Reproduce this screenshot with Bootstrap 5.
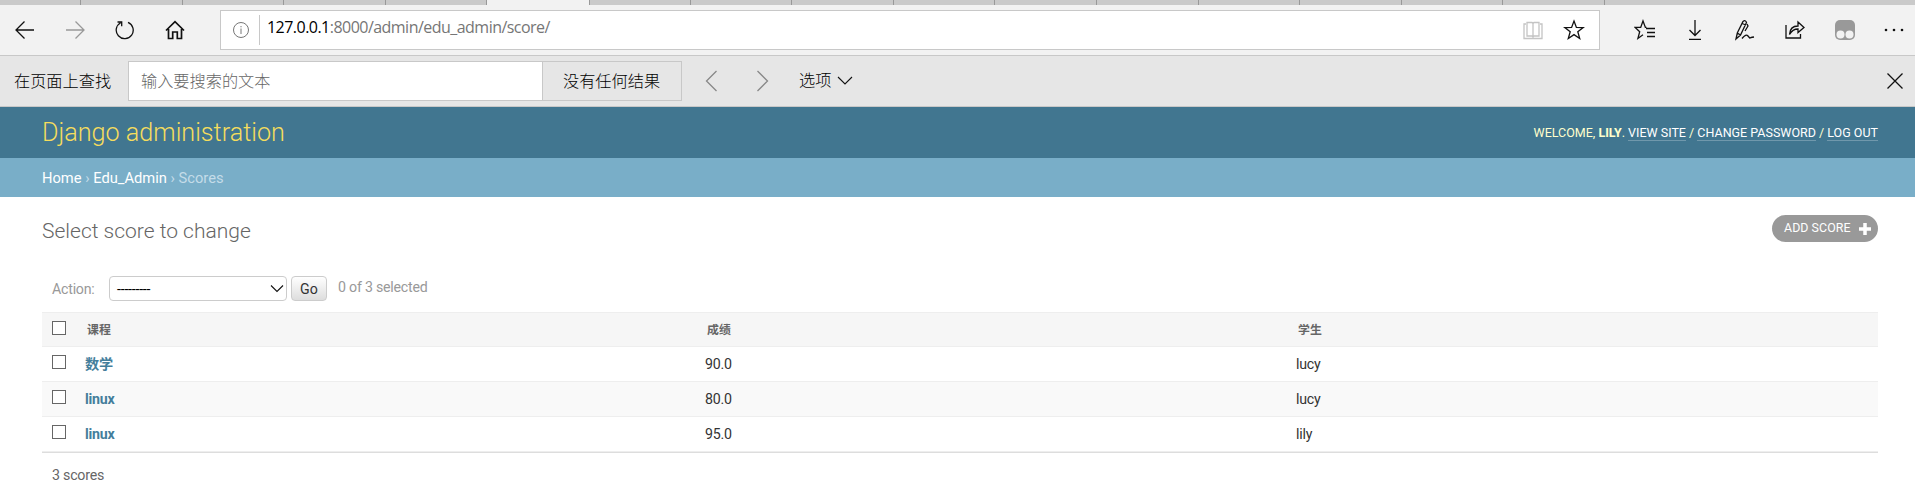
<!DOCTYPE html>
<html lang="zh">
<head>
<meta charset="utf-8">
<title>Select score to change | Django site admin</title>
<link href="https://cdn.jsdelivr.net/npm/bootstrap@5.3.0/dist/css/bootstrap.min.css" rel="stylesheet">
<style>
body{font-family:Roboto,"Noto Sans CJK SC",sans-serif;font-size:14.2px;letter-spacing:-.23px;line-height:20px;color:#333;height:490px;overflow:hidden;background:#fff}
svg{display:block;flex:none;fill:none;stroke:#111;stroke-width:1.3}
.tabstrip{height:5px;background:#cacaca;padding-left:80px}
.tabstrip i{flex:0 0 101.6px;border-left:1px solid #999;height:5px}
.tabstrip .live{background:#f2f2f2;flex-basis:103.6px;border-right:1px solid #999}
.tabstrip .live+i{border-left:0;flex-basis:99.6px}
.toolbar{height:51px;background:#f2f2f2;border-bottom:1px solid #c8c8c8;padding-bottom:1px}
.tool{width:50px;display:flex;justify-content:center;flex:none}
.address{margin-left:20px;width:1380px;height:40px;background:#fff;border:1px solid #c8c8c8;padding-left:11px;flex:none}
.url{font:16px/22px "Open Sans",sans-serif;color:#767676;border-left:1px solid #c8c8c8;height:30px;margin-left:9px;padding-left:7px;letter-spacing:-.53px;padding-top:1px}
.url b{font-weight:400;color:#000}
.findbar{height:51px;background:#e6e6e6;border-bottom:1px solid #c8c8c8;font:300 16.2px/24px "Noto Sans CJK SC",sans-serif;letter-spacing:0;color:#000;padding-left:14px}
.findlabel{width:114px;padding-bottom:3px}
.findinput{width:415px;height:40px;border:1px solid #c8c8c8;background:#fff;color:#666;padding:6px 12px}
.findresult{width:139px;height:40px;border:1px solid #c8c8c8;border-left:0;padding:6px 20px;white-space:nowrap}
.site-header{height:51px;background:#417690;padding:0 37px 0 42px;color:#ffc}
.brand{font-size:25.2px;font-weight:300;color:#f5dd5d;line-height:30px;margin:0;padding-top:1px;letter-spacing:0}
.usertools{font-size:12.5px;letter-spacing:0;text-transform:uppercase;line-height:14px}
.usertools a{color:#fff;text-decoration:none;border-bottom:1px solid rgba(255,255,255,.25)}
.crumbs{height:39px;background:#79aec8;color:#c4dce8;padding:10px 42px 8px;font-size:14.7px;letter-spacing:0}
.crumbs a{color:#fff;text-decoration:none}
.content{padding:0 37px 0 42px}
.heading{font-size:21px;font-weight:300;color:#666;line-height:25px;margin:0;letter-spacing:0}
.titlebar{height:27px;margin-top:18px}
.addlink{height:27px;width:106px;border-radius:14px;background:#999;color:#fff;font-size:12.4px;letter-spacing:.05px;padding-left:12px;text-decoration:none}
.addlink span{width:66px;margin-top:-2px;white-space:nowrap}
.actions{height:25px;margin-top:34px;padding-left:10px;color:#999}
.actions-label{width:57px}
.count{margin-left:11px;padding-bottom:3px}
.pick{width:178px;height:25px;border:1px solid #ccc;border-radius:4px;padding:0 2px 0 7px;color:#000}
.go{width:36px;height:25px;margin-left:4px;border:1px solid #ccc;border-radius:4px;background:linear-gradient(#fff,#ddd);padding:0;color:#333;line-height:22px}
.results{width:1836px;table-layout:fixed;border-collapse:separate;border-spacing:0;margin-top:11px;border-top:1px solid #eee}
.results td,.results th{height:35px;padding:0 8px;border-bottom:1px solid #eee;vertical-align:middle;line-height:18px}
.results th{background:#f6f6f6;color:#666;font-size:11.9px;letter-spacing:0;padding-left:10px;height:34px}
.results td a{font-weight:700;color:#447e9b;text-decoration:none}
.results .alt td{background:#f9f9f9}
.results .box{padding-left:10px}
.box span{display:block;width:14px;height:14px;border:1px solid #666;background:#fff;margin-bottom:4px}
.endline{border-top:1px solid #ddd;width:1836px}
.pager{color:#666;padding:12px 10px}
</style>
</head>
<body>
<div class="tabstrip d-flex"><i></i><i></i><i></i><i></i><i class="live"></i><i></i><i></i><i></i><i></i><i></i><i></i><i></i><i></i><i></i><i></i><i></i></div>
<div class="toolbar d-flex align-items-center">
  <span class="tool"><svg width="20" height="20"><path d="M19 10H1M9.500 1.500L1 10l8.500 8.500"/></svg></span>
  <span class="tool"><svg width="20" height="20" style="stroke:#999"><path d="M1 10h18M10.500 1.500L19 10l-8.500 8.500"/></svg></span>
  <span class="tool"><svg width="20" height="20"><path d="M13 2.300A8.500 8.500 0 1 1 5.600 2.700M2.500 2h4.200v4.300"/></svg></span>
  <span class="tool"><svg width="20" height="20"><path d="M1 10.500L10 1.700l9 8.800M3.500 9v9.500h4.200V12h4.600v6.500h4.200V9" stroke-width="1.7"/></svg></span>
  <div class="address d-flex align-items-center">
    <svg width="18" height="18" style="stroke:#777;stroke-width:1"><circle cx="9" cy="9" r="7.500"/><path d="M9 7.500V13M9 5v1.300"/></svg>
    <div class="url flex-grow-1"><b>127.0.0.1</b>:8000/admin/edu_admin/score/</div>
    <svg class="me-3" width="20" height="20" style="stroke:#c4c4c4"><path d="M10 3v14M10 3.500L9 2.500H4v13.500h5l1 1 1-1h5V2.500h-5zM3 4H1v14.500h18V4h-2"/></svg>
    <svg class="ms-1" width="22" height="22" style="margin-right:14px"><path d="M11 2l2.400 6.400 6.800.2-5.400 4.200 1.900 6.700L11 15.600l-5.700 3.900 1.900-6.700L1.800 8.600l6.800-.2z"/></svg>
  </div>
  <span class="tool ms-auto"><svg width="22" height="22"><path d="M12.500 8.400h-1.100L9 2 6.700 8.400H1.200l4.500 4.300-1.800 6.800 5.100-3.700M12 9.500h9M13 13.500h8M13 17.500h8"/></svg></span>
  <span class="tool"><svg width="20" height="22"><path d="M10 1v15M4.500 11l5.500 5.500 5.500-5.500M4 20.300h12"/></svg></span>
  <span class="tool"><svg width="22" height="22"><path d="M2 20l1.300-6L9 2.500q2.500-2 3.500 1L6.500 16zM3.300 14l3.200 2M8 4.500l4 1.500M13 5l1 2-3 5M8 19.500q4-5 6-2.500t2 2 4-1"/></svg></span>
  <span class="tool"><svg width="22" height="22"><path d="M2 6v13h14.500v-4M5.500 15.500Q6 7 14 7V3l6 5.500-6 5V10Q8.500 10 5.500 15.500z"/></svg></span>
  <span class="tool"><svg width="20" height="20" style="stroke:none"><rect width="20" height="20" rx="5" fill="#999"/><circle cx="5.500" cy="14.500" r="4" fill="#f2f2f2"/><circle cx="14.500" cy="14.500" r="4" fill="#f2f2f2"/></svg></span>
  <span class="tool" style="width:45px;padding-left:3px"><svg width="20" height="20" style="fill:#111;stroke:none"><circle cx="2" cy="10" r="1.300"/><circle cx="10" cy="10" r="1.300"/><circle cx="18" cy="10" r="1.300"/></svg></span>
</div>
<div class="findbar d-flex align-items-center">
  <span class="findlabel">在页面上查找</span><div class="findinput">输入要搜索的文本</div><div class="findresult">没有任何结果</div>
  <svg width="50" height="22" style="margin-left:6px;stroke:#888"><path d="M28.500 1l-10 10 10 10"/></svg>
  <svg width="50" height="22" style="stroke:#888"><path d="M19.500 1l10 10-10 10"/></svg>
  <span class="pb-1" style="margin-left:11px">选项</span>
  <svg width="16" height="10" style="margin-left:6px;stroke-width:1.1"><path d="M1 1l7 7 7-7"/></svg>
  <svg class="ms-auto" width="18" height="18" style="margin-right:11px"><path d="M1.500 1.500l15 15m0-15l-15 15"/></svg>
</div>
<header class="site-header d-flex align-items-center justify-content-between">
  <h1 class="brand">Django administration</h1>
  <div class="usertools">Welcome, <strong>lily</strong>. <a href="#">View site</a> / <a href="#">Change password</a> / <a href="#">Log out</a></div>
</header>
<nav class="crumbs"><a href="#">Home</a> › <a href="#">Edu_Admin</a> › Scores</nav>
<main class="content">
  <div class="titlebar d-flex justify-content-between">
    <h2 class="heading mt-1">Select score to change</h2>
    <a href="#" class="addlink d-flex align-items-center"><span>ADD SCORE</span><svg width="12" height="12" style="margin-left:9px;stroke:#fff;stroke-width:3.500"><path d="M6 0v12M0 6h12"/></svg></a>
  </div>
  <div class="actions d-flex align-items-center">
    <span class="actions-label">Action:</span>
    <div class="pick d-flex align-items-center justify-content-between"><span>---------</span><svg width="14" height="10" style="stroke-width:1.100"><path d="M1 1.500l6 6 6-6"/></svg></div>
    <button class="go">Go</button><span class="count">0 of 3 selected</span>
  </div>
  <table class="results">
    <colgroup><col style="width:35px"><col style="width:620px"><col style="width:591px"><col></colgroup>
    <thead><tr><th class="box"><span></span></th><th>课程</th><th>成绩</th><th>学生</th></tr></thead>
    <tbody>
      <tr><td class="box"><span></span></td><td><a href="#">数学</a></td><td>90.0</td><td>lucy</td></tr>
      <tr class="alt"><td class="box"><span></span></td><td><a href="#">linux</a></td><td>80.0</td><td>lucy</td></tr>
      <tr><td class="box"><span></span></td><td><a href="#">linux</a></td><td>95.0</td><td>lily</td></tr>
    </tbody>
  </table>
  <div class="endline"></div>
  <div class="pager">3 scores</div>
</main>
<script src="https://cdn.jsdelivr.net/npm/bootstrap@5.3.0/dist/js/bootstrap.bundle.min.js"></script>
</body>
</html>
